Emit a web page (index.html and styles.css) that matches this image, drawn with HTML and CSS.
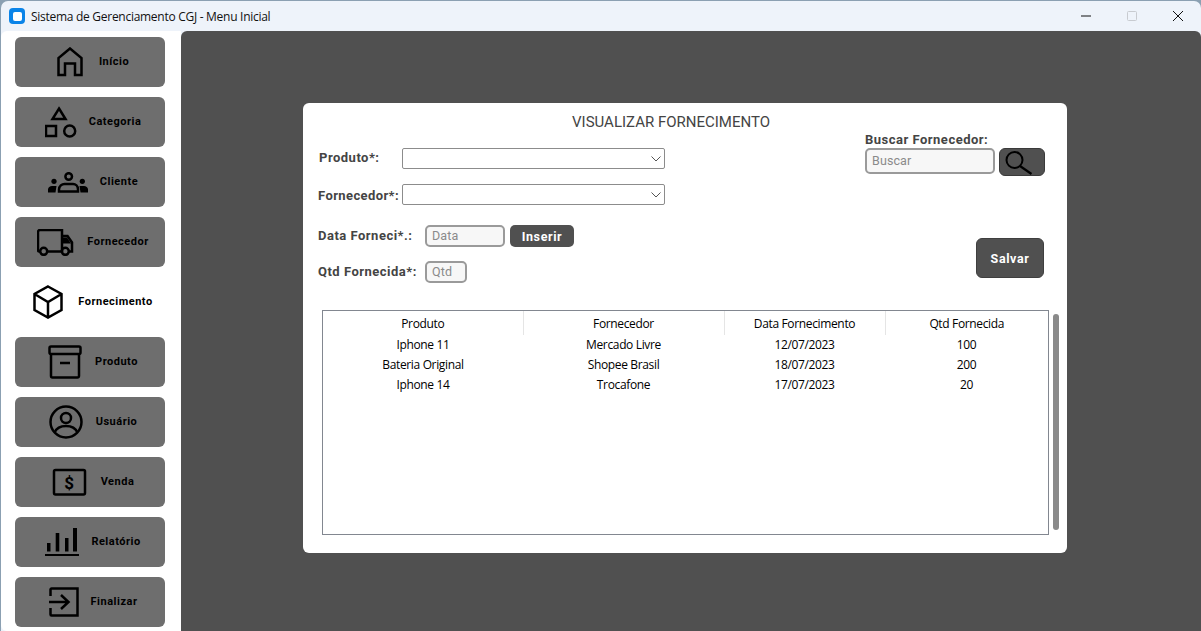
FILE: index.html
```html
<!DOCTYPE html>
<html>
<head>
  <title>Sistema de Gerenciamento CGJ - Menu Inicial</title>
  <link rel="stylesheet" href="styles.css">
</head>
<body>
  <div class="window">
    <div class="titlebar">
      <span class="app-icon"><span class="app-icon-inner"></span></span>
      <span class="titlebar-text">Sistema de Gerenciamento CGJ - Menu Inicial</span>
      <div class="win-controls">
        <span class="win-btn"><svg width="12" height="12" viewBox="0 0 12 12"><path d="M1 6h10" stroke="#111" stroke-width="1"/></svg></span>
        <span class="win-btn"><svg width="12" height="12" viewBox="0 0 12 12"><rect x="1.500" y="1.500" width="9" height="9" rx="1" fill="none" stroke="#c8cbd0"/></svg></span>
        <span class="win-btn"><svg width="12" height="12" viewBox="0 0 12 12"><path d="M1 1l10 10M11 1L1 11" stroke="#111" stroke-width="1"/></svg></span>
      </div>
    </div>

    <div class="app">
      <div class="sidebar">
        <a class="nav-btn" href="#">
          <svg class="nav-icon" width="30" height="30" viewBox="0 0 30 30"><path d="M13 1.500L1.500 11v17H8V16.500h10V28h6.500V11z"/></svg>
          <span>Início</span>
        </a>
        <a class="nav-btn" href="#">
          <svg class="nav-icon" width="32" height="32" viewBox="0 0 32 32"><path d="M14 2.500l6.500 10.500H7.500z"/><rect x="1" y="20" width="10" height="10"/><circle cx="24.700" cy="25" r="5.500"/></svg>
          <span>Categoria</span>
        </a>
        <a class="nav-btn" href="#">
          <svg class="nav-icon" width="40" height="21" viewBox="0 0 40 21"><circle cx="20.700" cy="4.500" r="3.300"/><path d="M11 19.500v-2c0-3.500 3-5.500 5.500-5.500h8.500c2.500 0 5 2 5 5.500v2z"/><circle class="solid" cx="6" cy="9.300" r="2.600"/><circle class="solid" cx="34.300" cy="9.300" r="2.600"/><path class="solid" d="M0 20.500v-3c0-2 2-3.500 4-3.500h4.500l-1 6.500zM40 20.500v-3c0-2-2-3.500-4-3.500h-4.500l1 6.500z"/></svg>
          <span>Cliente</span>
        </a>
        <a class="nav-btn" href="#">
          <svg class="nav-icon" width="38" height="27" viewBox="0 0 38 27"><path d="M3 22.500H2.500a1.500 1.500 0 0 1-1.500-1.500V3a2 2 0 0 1 2-2h22v21.500H10.500M25 7h5.500l4.500 6.500v9h-3M25 22.500h-.500"/><path class="solid" d="M26 14.500V8.500h4l4 6z"/><circle cx="6.700" cy="22.300" r="3.500"/><circle cx="28.300" cy="22.300" r="3.500"/></svg>
          <span>Fornecedor</span>
        </a>
        <a class="nav-btn nav-active" href="#">
          <svg class="nav-icon" width="33" height="34" viewBox="0 0 33 34"><path d="M15 1.500L28.500 9v16L15 32.500 1.500 25V9zM1.500 9L15 17l13.500-8M15 17v15.500"/></svg>
          <span>Fornecimento</span>
        </a>
        <a class="nav-btn" href="#">
          <svg class="nav-icon" width="35" height="34" viewBox="0 0 35 34"><rect x="1.500" y="1.500" width="31" height="7.500" rx="1.500"/><path d="M3 9v22a1.500 1.500 0 0 0 1.500 1.500h25A1.500 1.500 0 0 0 31 31V9M12 18h10"/></svg>
          <span>Produto</span>
        </a>
        <a class="nav-btn" href="#">
          <svg class="nav-icon" width="35" height="34" viewBox="0 0 35 34"><circle cx="17" cy="17" r="15.500"/><circle cx="17" cy="13" r="5"/><path d="M5.500 27.500c2-4.500 6-6.500 11.500-6.500s9.500 2 11.500 6.500"/></svg>
          <span>Usuário</span>
        </a>
        <a class="nav-btn" href="#">
          <svg class="nav-icon" width="37" height="28" viewBox="0 0 37 28"><rect x="2" y="2" width="31" height="24.500" rx="1.500"/><text class="icon-text" x="17.500" y="20.500">$</text></svg>
          <span>Venda</span>
        </a>
        <a class="nav-btn" href="#">
          <svg class="nav-icon" width="34" height="28" viewBox="0 0 34 28"><path class="solid" d="M2 15h3.500v8.500H2zM10.700 5h3.600v18.500h-3.600zM20 10h3.500v13.500H20zM28 0h4v23.500h-4zM0 26h34v2H0z"/></svg>
          <span>Relatório</span>
        </a>
        <a class="nav-btn" href="#">
          <svg class="nav-icon" width="30" height="30" viewBox="0 0 30 30"><path d="M1.500 9V2.500a1 1 0 0 1 1-1h26v27h-26a1 1 0 0 1-1-1V21M0 15h19M12 8l7.500 7-7.500 7"/></svg>
          <span>Finalizar</span>
        </a>
      </div>

      <div class="main">
        <div class="panel">
          <div class="panel-title">VISUALIZAR FORNECIMENTO</div>

          <div class="panel-top">
            <div class="form">
              <div class="form-row">
                <label class="form-label label-produto">Produto*:</label>
                <div class="select"><svg width="10" height="6" viewBox="0 0 10 6"><path d="M.5.500L5 5 9.500.500" fill="none" stroke="#555"/></svg></div>
              </div>
              <div class="form-row row-fornecedor">
                <label class="form-label label-fornecedor">Fornecedor*:</label>
                <div class="select"><svg width="10" height="6" viewBox="0 0 10 6"><path d="M.5.500L5 5 9.500.500" fill="none" stroke="#555"/></svg></div>
              </div>
              <div class="form-row row-data">
                <label class="form-label label-data">Data Forneci*.:</label>
                <input class="text-input input-data" type="text" placeholder="Data">
                <button class="btn-dark btn-inserir">Inserir</button>
              </div>
              <div class="form-row row-qtd">
                <label class="form-label label-data">Qtd Fornecida*:</label>
                <input class="text-input input-qtd" type="text" placeholder="Qtd">
              </div>
            </div>

            <div class="side">
              <label class="form-label label-busca">Buscar Fornecedor:</label>
              <div class="search-row">
                <input class="text-input input-busca" type="text" placeholder="Buscar">
                <button class="btn-search">
                  <svg width="44" height="26" viewBox="0 0 44 26"><circle cx="14.500" cy="11" r="8" fill="none" stroke="#000" stroke-width="2"/><path d="M20 17l11.500 8" stroke="#000" stroke-width="2.200"/></svg>
                </button>
              </div>
              <button class="btn-dark btn-salvar">Salvar</button>
            </div>
          </div>

          <div class="table-area">
            <div class="table-box">
              <table class="grid">
                <thead>
                  <tr><th class="col-produto">Produto</th><th class="col-fornecedor">Fornecedor</th><th class="col-data">Data Fornecimento</th><th>Qtd Fornecida</th></tr>
                </thead>
                <tbody>
                  <tr><td>Iphone 11</td><td>Mercado Livre</td><td>12/07/2023</td><td>100</td></tr>
                  <tr><td>Bateria Original</td><td>Shopee Brasil</td><td>18/07/2023</td><td>200</td></tr>
                  <tr><td>Iphone 14</td><td>Trocafone</td><td>17/07/2023</td><td>20</td></tr>
                </tbody>
              </table>
            </div>
            <div class="scrollbar"></div>
          </div>
        </div>
      </div>
    </div>
  </div>
</body>
</html>
```

FILE: styles.css
```css
* {
  box-sizing: border-box;
}

html, body {
  margin: 0;
  height: 100%;
  overflow: hidden;
  background-color: #8ba0b2;
}

.window {
  height: 631px;
  margin-left: 1px;
  padding-top: 1px;
  display: flex;
  flex-direction: column;
}

/* Title bar */
.titlebar {
  height: 30px;
  flex-shrink: 0;
  display: flex;
  align-items: center;
  padding-left: 8px;
  background-color: #eef3fa;
  border-radius: 7px 7px 0 0;
  font-family: "Open Sans", sans-serif;
  font-size: 12px;
  letter-spacing: -0.28px;
  color: #111;
}

.app-icon {
  width: 16px;
  height: 16px;
  border-radius: 4px;
  background-color: #0a84e8;
  display: flex;
  align-items: center;
  justify-content: center;
  margin-right: 6px;
}

.app-icon-inner {
  width: 9px;
  height: 9px;
  border-radius: 2px;
  background-color: #fff;
}

.titlebar-text {
  white-space: nowrap;
}

.win-controls {
  margin-left: auto;
  margin-right: 17px;
  display: flex;
  gap: 34px;
}

.win-btn {
  display: flex;
  width: 12px;
  height: 12px;
}

/* Layout */
.app {
  flex: 1;
  display: flex;
  min-height: 0;
  background-color: #eef3fa;
}

.sidebar {
  width: 180px;
  flex-shrink: 0;
  background-color: #fff;
  border-radius: 6px 0 0 6px;
  padding: 6px 0 0 14px;
  display: flex;
  flex-direction: column;
  gap: 10px;
}

.nav-btn {
  width: 150px;
  height: 50px;
  flex-shrink: 0;
  display: flex;
  align-items: center;
  justify-content: center;
  gap: 12px;
  padding-left: 6px;
  border-radius: 6px;
  background-color: #6e6e6e;
  color: #000;
  text-decoration: none;
  font-family: Roboto, sans-serif;
  font-size: 11px;
  font-weight: 700;
  letter-spacing: 0.5px;
}

.nav-btn span {
  margin-bottom: 1px;
}

.nav-active {
  background-color: #fff;
}

.nav-icon {
  flex-shrink: 0;
  fill: none;
  stroke: #000;
  stroke-width: 2.5;
}

.nav-icon .solid {
  fill: #000;
  stroke: none;
}

.icon-text {
  fill: #000;
  stroke: none;
  font-family: Roboto, sans-serif;
  font-size: 17px;
  font-weight: 700;
  text-anchor: middle;
}

.main {
  flex: 1;
  background-color: #505050;
  border-radius: 6px 6px 0 0;
  padding: 72px 0 0 122px;
}

/* Panel */
.panel {
  width: 764px;
  height: 450px;
  background-color: #fff;
  border-radius: 6px;
  font-family: Roboto, sans-serif;
}

.panel-title {
  height: 30px;
  padding: 9px 28px 0 0;
  line-height: 20px;
  text-align: center;
  font-size: 15px;
  color: #444;
}

.panel-top {
  height: 177px;
  display: flex;
  justify-content: space-between;
  padding: 0 22px 0 15px;
}

.form {
  display: flex;
  flex-direction: column;
  padding-top: 15px;
}

.form-row {
  display: flex;
  align-items: center;
}

.row-fornecedor {
  margin-top: 15px;
}

.row-data {
  margin-top: 20px;
}

.row-qtd {
  margin-top: 14px;
}

.form-label {
  font-size: 13px;
  font-weight: 700;
  letter-spacing: 0.5px;
  color: #444;
  white-space: nowrap;
  margin-bottom: 2px;
}

.label-produto {
  width: 84px;
  padding-left: 1px;
}

.label-fornecedor {
  width: 84px;
  margin-bottom: 0;
  margin-top: 1px;
  letter-spacing: 0.4px;
}

.label-data {
  width: 107px;
}

.label-busca {
  margin-bottom: 0;
  margin-top: -1px;
  height: 16px;
}

.select {
  width: 263px;
  height: 21px;
  border: 1px solid #8c8c8c;
  border-radius: 2px;
  background-color: #fff;
  display: flex;
  align-items: center;
  justify-content: flex-end;
  padding-right: 3px;
}

.text-input {
  height: 22px;
  border: 2px solid #9a9a9a;
  border-radius: 5px;
  background-color: #f7f7f7;
  padding: 0 5px 2px;
  font-family: Roboto, sans-serif;
  font-size: 12.500px;
  letter-spacing: 0.1px;
  color: #333;
  outline: none;
}

.text-input::placeholder {
  color: #8a8a8a;
  opacity: 1;
}

.input-data {
  width: 80px;
}

.input-qtd {
  width: 42px;
}

.input-busca {
  width: 130px;
  height: 26px;
}

.btn-dark {
  border: none;
  border-radius: 5px;
  background-color: #505050;
  color: #fff;
  font-family: Roboto, sans-serif;
  font-weight: 700;
  font-size: 12.500px;
  letter-spacing: 0.6px;
  padding: 0;
  cursor: pointer;
}

.btn-inserir {
  width: 64px;
  height: 22px;
  margin-left: 5px;
}

.side {
  width: 180px;
  display: flex;
  flex-direction: column;
  line-height: 15px;
}

.search-row {
  display: flex;
  gap: 4px;
  align-items: flex-start;
}

.btn-search {
  width: 46px;
  height: 28px;
  padding: 0;
  border: 1px solid #3a3a3a;
  border-radius: 6px;
  background-color: #505050;
  display: block;
  cursor: pointer;
}

.btn-search svg {
  display: block;
}

.btn-salvar {
  width: 68px;
  height: 40px;
  margin: 62px 1px 0 auto;
  border: 1px solid #3f3f3f;
  border-radius: 6px;
}

/* Table */
.table-area {
  display: flex;
  gap: 4px;
  padding-left: 19px;
}

.table-box {
  width: 727px;
  height: 225px;
  border: 1px solid #828790;
}

.grid {
  width: 100%;
  border-collapse: collapse;
  table-layout: fixed;
  font-family: "Open Sans", sans-serif;
  font-size: 12px;
  letter-spacing: -0.35px;
  color: #000;
}

.grid th {
  height: 24px;
  padding: 0;
  font-weight: 400;
  border-right: 1px solid #e5e5e5;
}

.grid th:last-child {
  border-right: none;
}

.grid td {
  height: 20px;
  padding: 0 0 1px;
  text-align: center;
}

.col-produto {
  width: 200px;
}

.col-fornecedor {
  width: 201px;
}

.col-data {
  width: 161px;
}

.scrollbar {
  width: 6px;
  height: 216px;
  margin-top: 4px;
  border-radius: 3px;
  background-color: #8a8a8a;
}
```
